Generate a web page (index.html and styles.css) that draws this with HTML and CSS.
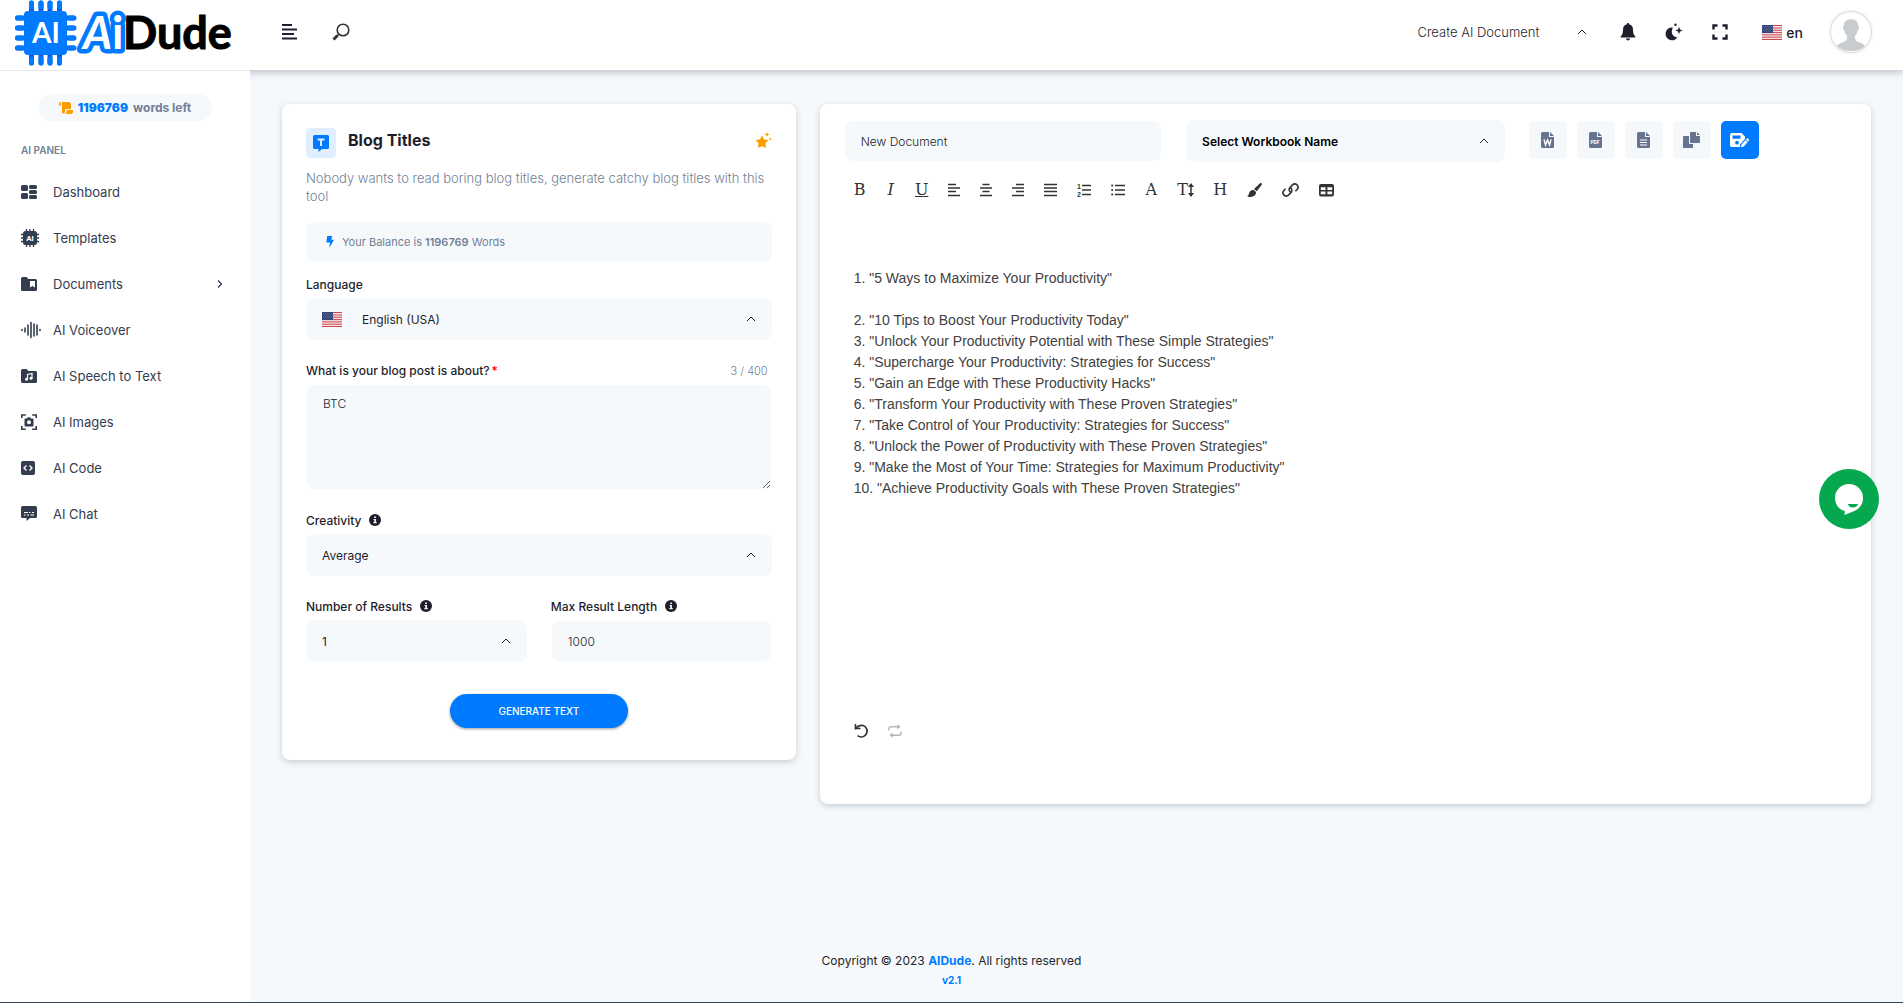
FILE: index.html
```html
<!DOCTYPE html>
<html lang="en">
<head>
    <meta charset="UTF-8">
    <meta name="viewport" content="width=device-width, initial-scale=1.0">
    <title>AiDude - Blog Titles</title>
    <link rel="stylesheet" href="styles.css">
</head>
<body>
    <!-- Shared icons -->
    <svg class="sprite" aria-hidden="true">
        <symbol id="caret" viewBox="0 0 10 6">
            <path d="M1 5l4-4 4 4" fill="none" stroke="currentColor" stroke-width="1"/>
        </symbol>
        <symbol id="flag-us" viewBox="0 0 20 15">
            <rect width="20" height="15" fill="#f6e4e7"/>
            <path d="M0 .5h20M0 3h20M0 5.300h20M0 7.600h20M0 9.900h20M0 12.200h20M0 14.500h20" stroke="#c9474f" stroke-width="1"/>
            <rect width="11" height="8" fill="#34457a"/>
            <path d="M1 1.500h10M2 3h9M1 4.500h10M2 6h9" stroke="#8d99bb" stroke-width=".6" stroke-dasharray=".8 1.200"/>
        </symbol>
        <symbol id="info" viewBox="0 0 12 12">
            <circle cx="6" cy="6" r="6" fill="#1e1e2d"/>
            <path d="M5.200 2.400h1.700v1.500H5.200zM4.600 4.900h2.300v3.200h.8v1.200H4.400V8.100h.9V6h-.7z" fill="#fff"/>
        </symbol>
    </svg>

    <header class="header">
        <a href="#" class="logo" aria-label="AiDude">
            <svg width="220" height="66" viewBox="0 0 220 66">
                <path d="M17.500 3v60M27 3v60M36 3v60M45.500 3v60M3.500 18h56M3.500 28h56M3.500 38h56M3.500 48h56" stroke="#0a5be0" stroke-width="5" stroke-linecap="round"/>
                <path d="M17.500 3v4M27 3v4M36 3v4M45.500 3v4M17.500 59v4M27 59v4M36 59v4M45.500 59v4M3.500 18h4M3.500 28h4M3.500 38h4M3.500 48h4M56 18h4M56 28h4M56 38h4M56 48h4" stroke="#007bff" stroke-width="5" stroke-linecap="round"/>
                <rect x="10" y="11" width="43" height="44" rx="4" fill="#007bff"/>
                <text x="18" y="43" class="logo-chip">AI</text>
                <text x="109" y="49" class="logo-dude">Dude</text>
                <text x="69" y="49" class="logo-ai"><tspan class="logo-a">A</tspan><tspan x="98">i</tspan></text>
            </svg>
        </a>
        <button class="icon-btn menu-btn" aria-label="Toggle menu">
            <svg width="15" height="16" viewBox="0 0 15 16"><path d="M0 1h10M0 5.500h15M0 10h12M0 14.500h15" stroke="#1e1e2d" stroke-width="2"/></svg>
        </button>
        <button class="icon-btn search-btn" aria-label="Search">
            <svg width="18" height="18" viewBox="0 0 18 18"><circle cx="11" cy="7" r="5.800" fill="none" stroke="#333" stroke-width="1.600"/><path d="M7 11l-2 2" stroke="#333" stroke-width="1.500"/><path d="M5.500 12.500l-4 4" stroke="#333" stroke-width="3"/></svg>
        </button>

        <div class="header-right">
            <button class="create-btn">
                <span>Create AI Document</span>
                <svg width="10" height="6"><use href="#caret"/></svg>
            </button>
            <button class="icon-btn" aria-label="Notifications">
                <svg width="16" height="18" viewBox="0 0 16 18"><path d="M8 0c.7 0 1.100.4 1.100 1.200C11.700 1.800 13 3.800 13 6.500c0 4 .8 5.500 2.300 7 .4.500.1 1.100-.5 1.100H1.200c-.6 0-.9-.6-.5-1.100C2.200 12 3 10.500 3 6.500c0-2.700 1.300-4.700 3.900-5.300C6.900.4 7.300 0 8 0z" fill="#1e1e2d"/><path d="M5.800 15.600h4.400c-.2 1-1.100 1.800-2.200 1.800s-2-.8-2.200-1.800z" fill="#1e1e2d"/></svg>
            </button>
            <button class="icon-btn" aria-label="Dark mode">
                <svg width="18" height="18" viewBox="0 0 18 18"><path d="M6.500 4.500a6.400 6.400 0 1 0 6 9.600C8.300 14.600 5 9.500 7.900 4.700a6 6 0 0 0-1.400-.2z" fill="#1e1e2d"/><path d="M14 3.800l1 2.700 2.800 1-2.800 1-1 2.700-1-2.700-2.700-1 2.700-1z" fill="#1e1e2d"/><circle cx="10.500" cy="1.800" r="1.200" fill="#1e1e2d"/></svg>
            </button>
            <button class="icon-btn" aria-label="Fullscreen">
                <svg width="16" height="16" viewBox="0 0 16 16"><path d="M1.500 5.500v-4h4M10.500 1.500h4v4M14.500 10.500v4h-4M5.500 14.500h-4v-4" fill="none" stroke="#1e1e2d" stroke-width="2.400"/></svg>
            </button>
            <button class="lang-btn">
                <svg width="20" height="15"><use href="#flag-us"/></svg>
                <span>en</span>
            </button>
            <a href="#" class="avatar" aria-label="Profile">
                <svg width="40" height="40" viewBox="0 0 38 38"><path d="M19 7c4.200 0 7 2.500 6.900 6.500 1 .4.700 3.800-.6 4.300-.4 2.200-1.400 3.700-2.600 5 0 3.500.9 4.800 4 6 2.700 1 4.600 1.900 5.600 3.400A18 18 0 0 1 19 37a18 18 0 0 1-13.300-4.800c1-1.500 2.900-2.400 5.600-3.400 3.100-1.200 4-2.500 4-6-1.200-1.300-2.200-2.800-2.600-5-1.300-.5-1.600-3.900-.6-4.300C12 9.500 14.800 7 19 7z" fill="#c8cccf"/></svg>
            </a>
        </div>
    </header>

    <div class="layout">
        <aside class="sidebar">
            <div class="words-left">
                <svg width="14" height="12" viewBox="0 0 14 12"><path d="M0 2a2 2 0 0 1 2-2v3.500H0zM3 0h6.500A2.500 2.500 0 0 1 12 2.500V7H7.500c-1 0-1.500.7-1.500 1.500V10a1.500 1.500 0 0 1-3 0z" fill="#ff9d00"/><path d="M7.500 8H14v1.500A2.500 2.500 0 0 1 11.500 12h-6c1.400 0 2-1 2-2z" fill="#ff9d00"/></svg>
                <b>1196769</b> <span>words left</span>
            </div>
            <h3 class="side-title">AI PANEL</h3>
            <nav class="side-nav">
                <a href="#">
                    <svg width="20" height="18" viewBox="0 0 20 18"><g fill="#343c4f"><rect x="0" y="2" width="7" height="6" rx="1.500"/><rect x="0" y="10" width="7" height="6" rx="1.500"/><rect x="8" y="2" width="8" height="4" rx="1.500"/><rect x="8" y="7" width="8" height="4" rx="1.500"/><rect x="8" y="12" width="8" height="4" rx="1.500"/></g></svg>
                    <span>Dashboard</span>
                </a>
                <a href="#">
                    <svg width="20" height="18" viewBox="0 0 20 18"><path d="M5.500 0v18M9 0v18M12.500 0v18M0 5.500h18M0 9h18M0 12.500h18" stroke="#343c4f" stroke-width="1.300"/><rect x="2" y="2" width="14" height="14" rx="2.500" fill="#343c4f"/><text x="9" y="12" class="chip-text">AI</text></svg>
                    <span>Templates</span>
                </a>
                <a href="#">
                    <svg width="20" height="18" viewBox="0 0 20 18"><path d="M1.500 2h4l2 2h7A1.500 1.500 0 0 1 16 5.500v9a1.500 1.500 0 0 1-1.500 1.500h-13A1.500 1.500 0 0 1 0 14.500v-11A1.500 1.500 0 0 1 1.500 2z" fill="#343c4f"/><path d="M9 6h5v6.500L11.500 11 9 12.500z" fill="#fff"/></svg>
                    <span>Documents</span>
                    <svg class="nav-arrow" width="6" height="10" viewBox="0 0 6 10"><path d="M1 1.500L4.500 5 1 8.500" fill="none" stroke="#343c4f" stroke-width="1.300"/></svg>
                </a>
                <a href="#">
                    <svg width="20" height="18" viewBox="0 0 20 18"><path d="M1 8.500v1M4 7v4M7 4v10M10 1.500v15M13 3v12M16 4v10M19 8.500v1" stroke="#343c4f" stroke-width="1.600" stroke-linecap="round"/></svg>
                    <span>AI Voiceover</span>
                </a>
                <a href="#">
                    <svg width="20" height="18" viewBox="0 0 20 18"><path d="M1.500 2h4l2 2h7A1.500 1.500 0 0 1 16 5.500v9a1.500 1.500 0 0 1-1.500 1.500h-13A1.500 1.500 0 0 1 0 14.500v-11A1.500 1.500 0 0 1 1.500 2z" fill="#343c4f"/><path d="M6.500 12V7.500l4.500-1V11" fill="none" stroke="#fff" stroke-width="1.200"/><circle cx="5.500" cy="12.200" r="1.500" fill="#fff"/><circle cx="10" cy="11.200" r="1.500" fill="#fff"/></svg>
                    <span>AI Speech to Text</span>
                </a>
                <a href="#">
                    <svg width="20" height="18" viewBox="0 0 20 18"><path d="M.8 5V2h4M11.200 2h4v3M15.200 13v3.200h-4M4.800 16.200h-4V13" fill="none" stroke="#343c4f" stroke-width="1.600"/><path d="M4.500 5.500h1.700l.6-1.200h2.400l.6 1.200h1.700a1 1 0 0 1 1 1v6a1 1 0 0 1-1 1h-7a1 1 0 0 1-1-1v-6a1 1 0 0 1 1-1z" fill="#343c4f"/><circle cx="8" cy="9.300" r="2" fill="#fff"/></svg>
                    <span>AI Images</span>
                </a>
                <a href="#">
                    <svg width="20" height="18" viewBox="0 0 20 18"><rect y="2" width="14" height="14" rx="2" fill="#343c4f"/><path d="M5.500 6.500L3 9l2.500 2.500M8.500 6.500L11 9l-2.500 2.500" fill="none" stroke="#fff" stroke-width="1.400"/></svg>
                    <span>AI Code</span>
                </a>
                <a href="#">
                    <svg width="20" height="18" viewBox="0 0 20 18"><path d="M1.500 1h13A1.500 1.500 0 0 1 16 2.500v9a1.500 1.500 0 0 1-1.500 1.500H9l-3.500 3v-3h-4A1.500 1.500 0 0 1 0 11.500v-9A1.500 1.500 0 0 1 1.500 1z" fill="#343c4f"/><path d="M3 7.500h4M8 7.500h1.500M11 7.500h2M3 10h1.500M6 10h2M9.500 10H13" stroke="#fff" stroke-width="1.200"/></svg>
                    <span>AI Chat</span>
                </a>
            </nav>
        </aside>

        <main class="content">
            <section class="card card-form">
                <div class="card-head">
                    <span class="tool-icon">
                        <svg width="16" height="17" viewBox="0 0 16 17"><path d="M1.500 0h13A1.500 1.500 0 0 1 16 1.500v11a1.500 1.500 0 0 1-1.500 1.500H9l-3.500 3v-3h-4A1.500 1.500 0 0 1 0 12.500v-11A1.500 1.500 0 0 1 1.500 0z" fill="#007bff"/><path d="M4.500 4.500h7M8 4.500V11" stroke="#e0efff" stroke-width="2"/></svg>
                    </span>
                    <h1>Blog Titles</h1>
                    <button class="icon-btn" aria-label="Favorite">
                        <svg width="16" height="17" viewBox="0 0 16 17"><path d="M6 4l1.900 3.700 4.100.6L9.100 11.200l.7 4.300L6 13.700l-3.800 1.800.7-4.300L0 8.300l4.100-.6z" fill="#ff9d00" stroke="#ff9d00" stroke-width=".6" stroke-linejoin="round"/><path d="M11 0l.7 1.700 1.800.8-1.800.7L11 5l-.7-1.800-1.800-.7 1.800-.8zM14.300 5.200l.5 1.300 1.200.5-1.200.5-.5 1.300-.5-1.300-1.300-.5 1.300-.5z" fill="#ff9d00"/></svg>
                    </button>
                </div>
                <p class="description">Nobody wants to read boring blog titles, generate catchy blog titles with this tool</p>
                <div class="balance">
                    <svg width="8" height="12" viewBox="0 0 8 12"><path d="M1.200 0h5L5.300 3.800H8L3.200 12l.9-5.500H.3z" fill="#007bff"/></svg>
                    <span>Your Balance is <b>1196769</b> Words</span>
                </div>

                <form>
                    <div class="field">
                        <label for="language">Language</label>
                        <div class="select-box with-flag">
                            <svg class="flag" width="20" height="15"><use href="#flag-us"/></svg>
                            <select id="language"><option>English (USA)</option></select>
                            <svg class="caret" width="10" height="6"><use href="#caret"/></svg>
                        </div>
                    </div>
                    <div class="field">
                        <div class="label-row">
                            <label for="about">What is your blog post is about? <span class="required">*</span></label>
                            <span class="counter">3 / 400</span>
                        </div>
                        <textarea id="about">BTC</textarea>
                    </div>
                    <div class="field">
                        <label for="creativity">Creativity <svg width="12" height="12"><use href="#info"/></svg></label>
                        <div class="select-box">
                            <select id="creativity"><option>Average</option></select>
                            <svg class="caret" width="10" height="6"><use href="#caret"/></svg>
                        </div>
                    </div>
                    <div class="field-row">
                        <div class="field">
                            <label for="results">Number of Results <svg width="12" height="12"><use href="#info"/></svg></label>
                            <div class="select-box">
                                <select id="results"><option>1</option></select>
                                <svg class="caret" width="10" height="6"><use href="#caret"/></svg>
                            </div>
                        </div>
                        <div class="field">
                            <label for="length">Max Result Length <svg width="12" height="12"><use href="#info"/></svg></label>
                            <input type="text" id="length" value="1000">
                        </div>
                    </div>
                    <button type="button" class="generate-btn">GENERATE TEXT</button>
                </form>
            </section>

            <section class="card card-editor">
                <div class="doc-row">
                    <input type="text" class="doc-name" value="New Document" aria-label="Document name">
                    <div class="select-box workbook">
                        <select aria-label="Workbook"><option>Select Workbook Name</option></select>
                        <svg class="caret" width="10" height="6"><use href="#caret"/></svg>
                    </div>
                    <div class="doc-actions">
                        <button aria-label="Export Word">
                            <svg width="13" height="16" viewBox="0 0 13 16"><path d="M1.500 0H8v5h5v9.500a1.500 1.500 0 0 1-1.500 1.500h-10A1.500 1.500 0 0 1 0 14.500v-13A1.500 1.500 0 0 1 1.500 0zM9 0l4 4H9z" fill="#67738f"/><path d="M3 7.500l1.500 5.500 2-5 2 5L10 7.500" fill="none" stroke="#fff" stroke-width="1.400"/></svg>
                        </button>
                        <button aria-label="Export PDF">
                            <svg width="13" height="16" viewBox="0 0 13 16"><path d="M1.500 0H8v5h5v9.500a1.500 1.500 0 0 1-1.500 1.500h-10A1.500 1.500 0 0 1 0 14.500v-13A1.500 1.500 0 0 1 1.500 0zM9 0l4 4H9z" fill="#67738f"/><text x="6" y="12" class="pdf-text">PDF</text></svg>
                        </button>
                        <button aria-label="Export text">
                            <svg width="13" height="16" viewBox="0 0 13 16"><path d="M1.500 0H8v5h5v9.500a1.500 1.500 0 0 1-1.500 1.500h-10A1.500 1.500 0 0 1 0 14.500v-13A1.500 1.500 0 0 1 1.500 0zM9 0l4 4H9z" fill="#67738f"/><path d="M3 8h7M3 10.500h7M3 13h7" stroke="#fff" stroke-width="1.100"/></svg>
                        </button>
                        <button aria-label="Copy">
                            <svg width="17" height="16" viewBox="0 0 17 16"><path d="M1 4h5v8h4v3a1 1 0 0 1-1 1H1a1 1 0 0 1-1-1V5a1 1 0 0 1 1-1z" fill="#67738f"/><path d="M8 0h5v4h4v6a1 1 0 0 1-1 1H8a1 1 0 0 1-1-1V1a1 1 0 0 1 1-1zM14 0l3 3h-3z" fill="#67738f"/></svg>
                        </button>
                        <button class="save-btn" aria-label="Save">
                            <svg width="19" height="16" viewBox="0 0 19 16"><path fill-rule="evenodd" d="M2 1h9.500L15 4.500V7l-5 5.500V15H2a2 2 0 0 1-2-2V3a2 2 0 0 1 2-2zm.5 2.500v3.300h8V3.500zM7 8.800a1.900 1.900 0 1 0 0 3.800 1.900 1.900 0 0 0 0-3.800z" fill="#fff"/><path d="M11.500 12.500l4-4.500 2.300 2-4.100 4.500-2.700.7zM16 7.400l.8-.8a.9.9 0 0 1 1.200 0l.9.800a.9.900 0 0 1 0 1.200l-.7.8z" fill="#fff"/></svg>
                        </button>
                    </div>
                </div>

                <div class="toolbar">
                    <button class="w12" title="Bold">B</button>
                    <button class="w10" title="Italic"><i>I</i></button>
                    <button class="w12" title="Underline"><u>U</u></button>
                    <button title="Align left"><svg width="12" height="14" viewBox="0 0 12 14"><path d="M0 1.500h8M0 5h12M0 8.500h8M0 12.500h12" stroke="currentColor" stroke-width="1.500"/></svg></button>
                    <button title="Align center"><svg width="12" height="14" viewBox="0 0 12 14"><path d="M2.500 1.500h7M0 5h12M2.500 8.500h7M0 12.500h12" stroke="currentColor" stroke-width="1.500"/></svg></button>
                    <button title="Align right"><svg width="12" height="14" viewBox="0 0 12 14"><path d="M4 1.500h8M0 5h12M4 8.500h8M0 12.500h12" stroke="currentColor" stroke-width="1.500"/></svg></button>
                    <button title="Justify"><svg width="13" height="14" viewBox="0 0 13 14"><path d="M0 1.500h13M0 5h13M0 8.500h13M0 12.500h13" stroke="currentColor" stroke-width="1.500"/></svg></button>
                    <button title="Ordered list"><svg width="14" height="14" viewBox="0 0 14 14"><path d="M5 2.500h9M5 7h9M5 11.500h9" stroke="currentColor" stroke-width="1.600"/><text x="0" y="6" class="ol-num">1</text><text x="0" y="14" class="ol-num">2</text></svg></button>
                    <button title="Unordered list"><svg width="14" height="14" viewBox="0 0 14 14"><path d="M4 2.500h10M4 7h10M4 11.500h10" stroke="currentColor" stroke-width="1.600"/><circle cx="1.200" cy="2.500" r="1.100" fill="currentColor"/><circle cx="1.200" cy="7" r="1.100" fill="currentColor"/><circle cx="1.200" cy="11.500" r="1.100" fill="currentColor"/></svg></button>
                    <button class="w13" title="Font color">A</button>
                    <button class="w16" title="Font size">T<svg width="6" height="14" viewBox="0 0 6 14"><path d="M3 2v10" stroke="currentColor" stroke-width="1.500"/><path d="M0 4l3-4 3 4zM0 10l3 4 3-4z" fill="currentColor"/></svg></button>
                    <button class="w13" title="Heading">H</button>
                    <button title="Brush"><svg width="15" height="14" viewBox="0 0 15 14"><path d="M14.500.3c.6.500.5 1 .1 1.600L9.800 8.300 7 6 12.800.4c.6-.5 1.200-.6 1.700-.1zM6.300 6.700l2.800 2.400C9 12.500 6.500 14 3.500 14 1.800 14 .6 13.600 0 12.800c1 0 1.500-.5 1.700-1.500.4-2.300 2-4.300 4.600-4.600z" fill="currentColor"/></svg></button>
                    <button title="Link"><svg width="17" height="14" viewBox="0 0 17 14"><g fill="none" stroke="currentColor" stroke-width="1.600"><path d="M9.300 9.700C7 8.500 6.500 6.300 8 4.500l2.300-2.400c1.400-1.300 3.400-1.400 4.700-.2s1.300 3.200.1 4.600l-1.700 1.800"/><path d="M7.700 4.300C10 5.500 10.500 7.700 9 9.500l-2.300 2.400c-1.400 1.300-3.400 1.400-4.700.2s-1.300-3.200-.1-4.600l1.700-1.800"/></g></svg></button>
                    <button title="Table"><svg width="15" height="14" viewBox="0 0 15 14"><path fill-rule="evenodd" d="M2 1h11a2 2 0 0 1 2 2v8.500a2 2 0 0 1-2 2H2a2 2 0 0 1-2-2V3a2 2 0 0 1 2-2zm-.2 3.200v2.700h4.700V4.200zm6.600 0v2.700h4.800V4.200zM1.800 8.600v2.700h4.700V8.600zm6.600 0v2.700h4.800V8.600z" fill="currentColor"/></svg></button>
                </div>

                <div class="editor-text" contenteditable="true">
                    <p>1. "5 Ways to Maximize Your Productivity"</p>
                    <p>
                        2. "10 Tips to Boost Your Productivity Today"<br>
                        3. "Unlock Your Productivity Potential with These Simple Strategies"<br>
                        4. "Supercharge Your Productivity: Strategies for Success"<br>
                        5. "Gain an Edge with These Productivity Hacks"<br>
                        6. "Transform Your Productivity with These Proven Strategies"<br>
                        7. "Take Control of Your Productivity: Strategies for Success"<br>
                        8. "Unlock the Power of Productivity with These Proven Strategies"<br>
                        9. "Make the Most of Your Time: Strategies for Maximum Productivity"<br>
                        10. "Achieve Productivity Goals with These Proven Strategies"
                    </p>
                </div>

                <div class="history">
                    <button title="Undo"><svg width="14" height="14" viewBox="0 0 14 14"><path d="M2 4.500h4.500M1.500 0v5.500" stroke="currentColor" stroke-width="1.700"/><path d="M2 4.500C4.500.8 9 .3 11.500 3c2.300 2.600 2 6.200-.3 8.300-2.200 2-5.500 2-7.700.3" fill="none" stroke="currentColor" stroke-width="1.700"/></svg></button>
                    <button title="Redo" disabled><svg width="14" height="14" viewBox="0 0 14 14"><path d="M.8 6.500V5a2.300 2.300 0 0 1 2.300-2.300h7.500M13.200 7.500V9a2.300 2.300 0 0 1-2.300 2.300H3.400" fill="none" stroke="currentColor" stroke-width="1.400"/><path d="M9.500 0l3 2.700-3 2.700zM4.500 8.600l-3 2.700 3 2.700z" fill="currentColor"/></svg></button>
                </div>
            </section>
        </main>

        <footer class="footer">
            <p>Copyright © 2023 <a href="#">AIDude</a>. All rights reserved</p>
            <p class="version">v2.1</p>
        </footer>
    </div>

    <button class="chat-widget" aria-label="Open chat">
        <svg width="28" height="31" viewBox="0 0 28 31"><path d="M14 0a14 14 0 0 1 14 14c0 6-3 10-7.500 12.500L9.500 31l.3-4C4 25.500 0 20.500 0 14A14 14 0 0 1 14 0z" fill="#fff"/><path d="M12.800 20H23c-.8 2.400-2.600 3.600-5 3.600s-4.400-1.200-5.200-3.600z" fill="#05a84e"/></svg>
    </button>
</body>
</html>
```
FILE: styles.css
```css
* {
    box-sizing: border-box;
}

body {
    margin: 0;
    min-height: 100vh;
    display: flex;
    flex-direction: column;
    background: #f5f9fc;
    border-bottom: 1px solid #34435e;
    font-family: "Inter", sans-serif;
    font-size: 12px;
    color: #1e1e2d;
}

button,
input,
select,
textarea {
    font-family: inherit;
    font-size: 12px;
    color: inherit;
}

button {
    display: inline-flex;
    align-items: center;
    justify-content: center;
    padding: 0;
    border: none;
    background: none;
    cursor: pointer;
}

a {
    color: inherit;
    text-decoration: none;
}

h1,
h3,
p {
    margin: 0;
}

svg {
    flex-shrink: 0;
}

.sprite {
    position: absolute;
    width: 0;
    height: 0;
}

/* Header */
.header {
    display: flex;
    align-items: center;
    height: 70px;
    padding: 0 32px 6px 14px;
    background: #fff;
    box-shadow: 0 2px 8px rgba(60, 75, 90, 0.35);
}

.logo {
    display: flex;
    align-self: flex-start;
    width: 268px;
}

.logo-chip {
    font: bold 28px "Lato", sans-serif;
    fill: #fff;
}

.logo-dude {
    font: bold 45px "Lato", sans-serif;
    fill: #000;
    stroke: #000;
}

.logo-ai {
    font: bold 45px "Lato", sans-serif;
    fill: #fff;
    stroke: #007bff;
    stroke-width: 9px;
    stroke-linejoin: round;
    paint-order: stroke;
}

.logo-a {
    font-style: italic;
}

.search-btn {
    margin-left: 35px;
}

.header-right {
    display: flex;
    align-items: center;
    margin-left: auto;
}

.header-right .icon-btn {
    width: 46px;
}

.create-btn {
    gap: 38px;
    margin-right: 18px;
    font-size: 13px;
    font-weight: 300;
}

.lang-btn {
    gap: 4px;
    margin: 0 28px 0 19px;
    font-size: 14px;
    font-weight: 500;
}

.avatar {
    display: flex;
    border-radius: 50%;
    box-shadow: 0 0 3px rgba(0, 0, 0, 0.35);
}

/* Page grid, the footer is centered on the whole page */
.layout {
    flex: 1;
    display: grid;
    grid-template-columns: 250px 1fr;
    grid-template-rows: 1fr auto;
}

.sidebar {
    grid-column: 1;
    grid-row: 1 / 3;
    z-index: 1;
    padding: 23px 21px;
    background: #fff;
    border-top: 1px solid #e6e8ef;
}

.words-left {
    display: flex;
    align-items: center;
    justify-content: center;
    gap: 5px;
    height: 27px;
    margin: 0 17px;
    border-radius: 14px;
    background: #f5f9fc;
    font-weight: 700;
    color: #728096;
}

.words-left b {
    color: #007bff;
}

.side-title {
    margin: 22px 0 12px;
    font-size: 10px;
    line-height: 14px;
    font-weight: 600;
    color: #728096;
}

.side-nav a {
    display: flex;
    align-items: center;
    gap: 12px;
    height: 46px;
    font-size: 13px;
    color: #343c4f;
}

.nav-arrow {
    margin-left: auto;
    margin-right: 6px;
}

/* Content */
.content {
    grid-column: 2;
    grid-row: 1;
    display: grid;
    grid-template-columns: repeat(12, 1fr);
    gap: 24px;
    align-items: start;
    padding: 34px 32px;
}

.card {
    padding: 24px;
    border-radius: 8px;
    background: #fff;
    box-shadow: 0 2px 6px rgba(60, 75, 90, 0.25);
}

.card-form {
    grid-column: span 4;
    padding-bottom: 32px;
}

.card-editor {
    grid-column: span 8;
    padding-top: 16px;
    padding-bottom: 66px;
}

.card-head {
    display: flex;
    align-items: center;
    gap: 12px;
}

.card-head h1 {
    flex: 1;
    font-size: 16px;
    font-weight: 700;
}

.card-head h1,
.card-head .icon-btn {
    padding-bottom: 6px;
}

.tool-icon {
    display: flex;
    align-items: center;
    justify-content: center;
    width: 30px;
    height: 30px;
    border-radius: 4px;
    background: #e0efff;
}

.description {
    margin: 11px 0 17px;
    font-size: 13px;
    font-weight: 300;
    line-height: 18px;
    color: #728096;
}

.balance {
    display: flex;
    align-items: center;
    gap: 8px;
    height: 40px;
    margin-bottom: 14px;
    padding: 0 20px;
    border-radius: 8px;
    background: #f5f9fc;
    font-size: 11px;
    color: #728096;
}

.balance b {
    font-weight: 600;
}

.field {
    margin-bottom: 22px;
}

label {
    display: flex;
    align-items: center;
    gap: 8px;
    height: 16px;
    margin-bottom: 6px;
    font-size: 12px;
    font-weight: 500;
}

.required {
    margin-left: -6px;
    color: #f00;
}

.label-row {
    display: flex;
    justify-content: space-between;
}

.counter {
    padding-right: 4px;
    font-size: 11px;
    font-weight: 300;
    line-height: 18px;
    color: #728096;
}

.select-box {
    display: grid;
    align-items: center;
}

.select-box > * {
    grid-area: 1 / 1;
}

select {
    width: 100%;
    height: 42px;
    padding: 0 16px;
    border: none;
    border-radius: 8px;
    background: #f5f9fc;
    appearance: none;
}

.caret,
.flag {
    z-index: 1;
    pointer-events: none;
}

.select-box .caret {
    justify-self: end;
    margin-right: 16px;
}

.flag {
    margin-left: 16px;
}

.with-flag select {
    padding-left: 56px;
}

input,
textarea {
    display: block;
    width: 100%;
    height: 42px;
    padding: 0 16px;
    border: 1px solid #fff;
    border-radius: 8px;
    background: #f5f9fc;
    background-clip: padding-box;
    font-weight: 300;
}

textarea {
    height: 106px;
    padding: 11px 16px;
}

.label-row + textarea {
    margin-bottom: 22px;
}

.field-row {
    display: grid;
    grid-template-columns: 1fr 1fr;
    gap: 24px;
}

.generate-btn {
    display: flex;
    width: 178px;
    height: 34px;
    margin: 10px auto 0;
    border-radius: 17px;
    background: #007bff;
    box-shadow: 0 1px 3px rgba(0, 0, 0, 0.4);
    font-size: 10px;
    font-weight: 500;
    color: #fff;
}

/* Editor */
.doc-row {
    display: grid;
    grid-template-columns: repeat(3, 1fr);
    gap: 24px;
}

.workbook select {
    font-weight: 600;
    color: #000;
}

.doc-actions {
    display: flex;
    align-items: center;
    gap: 10px;
    padding-bottom: 2px;
}

.doc-actions button {
    width: 38px;
    height: 38px;
    border-radius: 5px;
    background: #f5f9fc;
}

.doc-actions .save-btn {
    background: #007bff;
}

.pdf-text {
    font: bold 5px "Roboto", sans-serif;
    fill: #fff;
    text-anchor: middle;
}

.chip-text {
    font: bold 8px "Roboto", sans-serif;
    fill: #fff;
    text-anchor: middle;
}

.ol-num {
    font: bold 7px "Liberation Sans", sans-serif;
    fill: currentColor;
}

.toolbar {
    display: flex;
    align-items: center;
    gap: 20px;
    height: 20px;
    margin: 18px 10px 0;
    color: #333;
}

.toolbar button {
    height: 20px;
    font: 16px/20px "DejaVu Serif", serif;
}

.toolbar .w10 {
    width: 10px;
}

.toolbar .w12 {
    width: 12px;
}

.toolbar .w13 {
    width: 13px;
}

.toolbar .w16 {
    width: 16px;
}

.editor-text {
    min-height: 453px;
    padding: 68px 10px 0;
    font: 14px/21px "Liberation Sans", Arial, sans-serif;
    color: #414141;
}

.editor-text p {
    margin-bottom: 21px;
}

.history {
    display: flex;
    gap: 20px;
    height: 14px;
    margin: 71px 10px 0;
    color: #333;
}

.history button:disabled {
    color: #b5b5b5;
}

/* Footer */
.footer {
    grid-column: 1 / 3;
    grid-row: 2;
    padding-bottom: 13px;
    text-align: center;
    line-height: 20px;
}

.footer a {
    font-weight: 700;
    color: #007bff;
}

.footer .version {
    font-size: 10px;
    line-height: 18px;
    font-weight: 700;
    color: #007bff;
}

/* Chat */
.chat-widget {
    position: fixed;
    right: 24px;
    bottom: 474px;
    z-index: 2;
    width: 60px;
    height: 60px;
    border-radius: 50%;
    background: #05a84e;
}
```
